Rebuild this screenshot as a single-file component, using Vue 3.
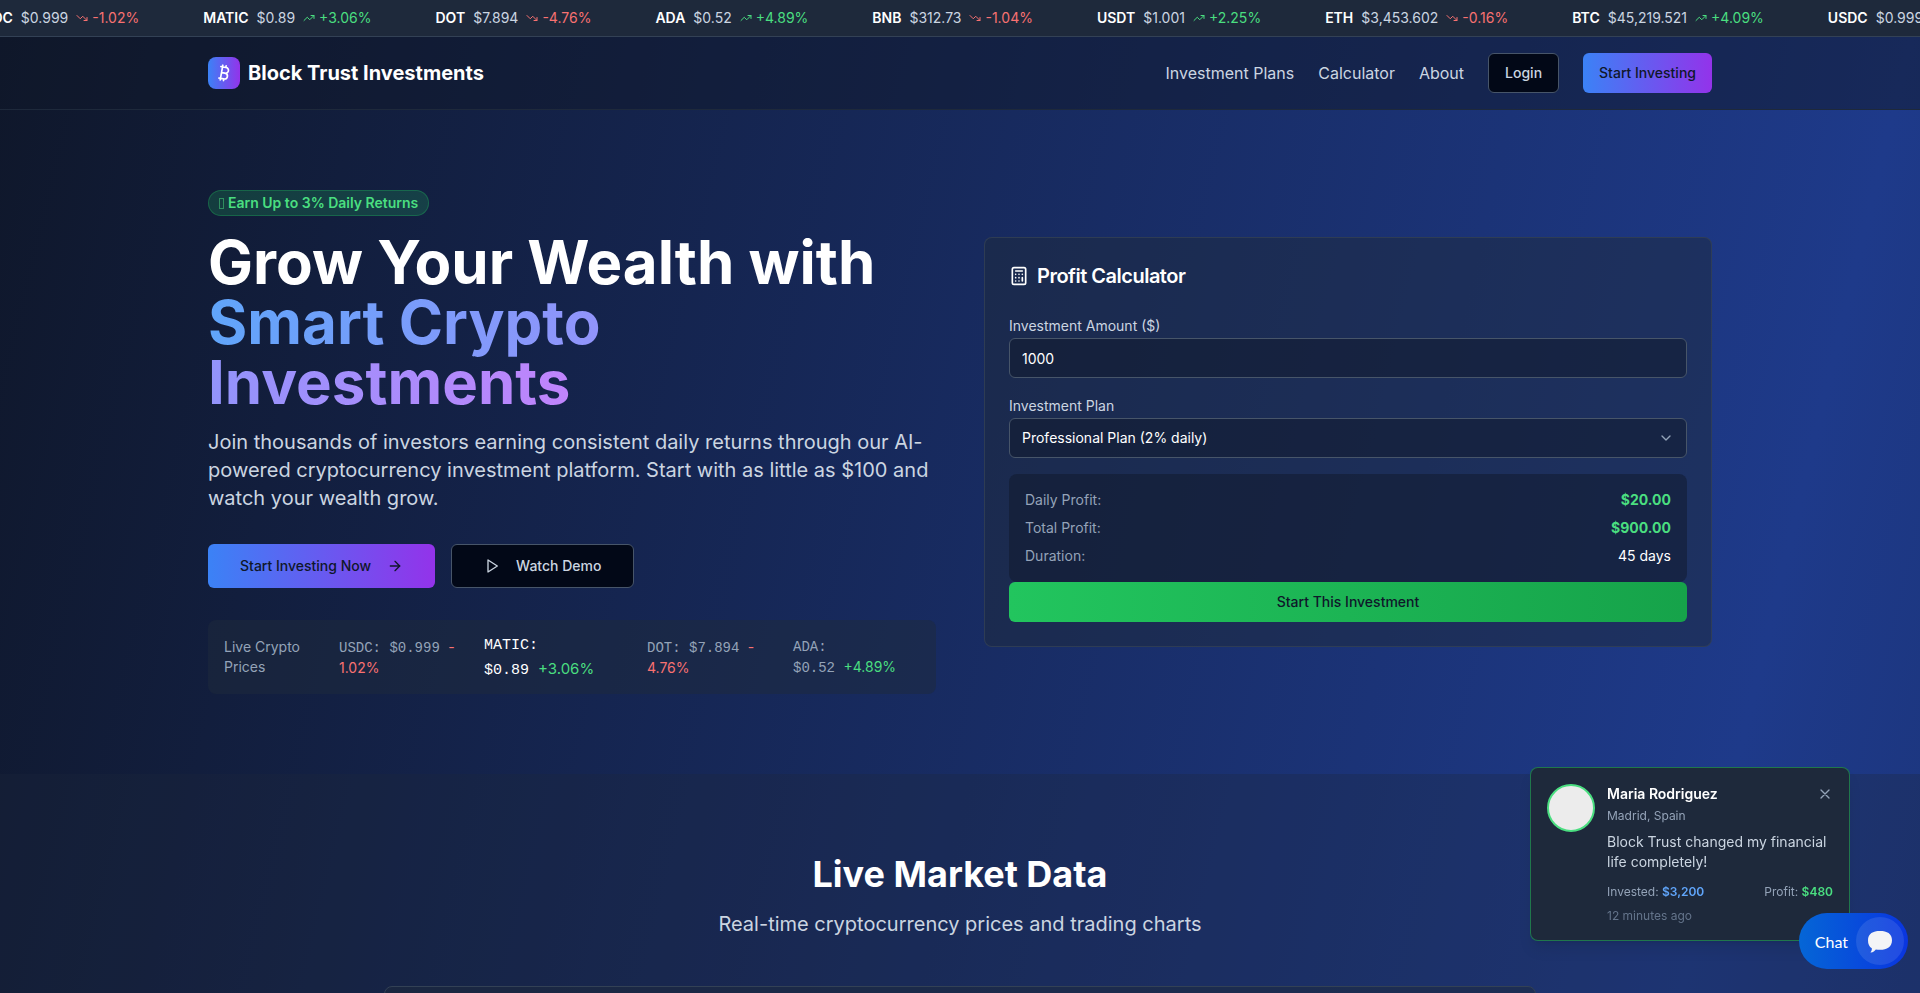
<script setup>
import { computed, ref } from 'vue'

const coins = [
  { symbol: 'USDC', price: '$0.999', change: -1.02 },
  { symbol: 'MATIC', price: '$0.89', change: 3.06 },
  { symbol: 'DOT', price: '$7.894', change: -4.76 },
  { symbol: 'ADA', price: '$0.52', change: 4.89 },
  { symbol: 'BNB', price: '$312.73', change: -1.04 },
  { symbol: 'USDT', price: '$1.001', change: 2.25 },
  { symbol: 'ETH', price: '$3,453.602', change: -0.16 },
  { symbol: 'BTC', price: '$45,219.521', change: 4.09 }
]

// the first coin comes round again at the end of the strip
const tickerItems = [...coins, coins[0]]

const plans = [
  { id: 'starter', name: 'Starter Plan', rate: 1, days: 30 },
  { id: 'professional', name: 'Professional Plan', rate: 2, days: 45 },
  { id: 'elite', name: 'Elite Plan', rate: 3, days: 60 }
]

const amount = ref('1000')
const planId = ref('professional')
const showToast = ref(true)

const plan = computed(() => plans.find(p => p.id === planId.value))
const dailyProfit = computed(() => ((Number(amount.value) || 0) * plan.value.rate) / 100)
const totalProfit = computed(() => dailyProfit.value * plan.value.days)

function formatChange(value) {
  return `${value > 0 ? '+' : ''}${value.toFixed(2)}%`
}

function trendClass(value) {
  return value > 0 ? 'up' : 'down'
}
</script>

<template>
  <div class="page">
    <div class="ticker">
      <div class="ticker-track">
        <div v-for="(coin, i) in tickerItems" :key="i" class="ticker-item">
          <span class="ticker-symbol">{{ coin.symbol }}</span>
          <span class="ticker-price">{{ coin.price }}</span>
          <span class="ticker-change" :class="trendClass(coin.change)">
            <svg v-if="coin.change > 0" class="icon icon-xs" viewBox="0 0 24 24">
              <polyline points="22 7 13.5 15.5 8.5 10.5 2 17" />
              <polyline points="16 7 22 7 22 13" />
            </svg>
            <svg v-else class="icon icon-xs" viewBox="0 0 24 24">
              <polyline points="22 17 13.5 8.5 8.5 13.5 2 7" />
              <polyline points="16 17 22 17 22 11" />
            </svg>
            {{ formatChange(coin.change) }}
          </span>
        </div>
      </div>
    </div>

    <header class="header">
      <div class="container header-inner">
        <div class="brand">
          <span class="brand-mark">
            <svg class="icon icon-md" viewBox="0 0 24 24">
              <path d="M11.767 19.089c4.924.868 6.14-6.025 1.216-6.894m-1.216 6.894L5.86 18.047m5.908 1.042-.347 1.97m1.563-8.864c4.924.869 6.14-6.025 1.215-6.893m-1.215 6.893-3.94-.694m5.155-6.2L8.29 4.26m5.908 1.042.348-1.97M7.48 20.364l3.126-17.727" />
            </svg>
          </span>
          <span class="brand-name">Block Trust Investments</span>
        </div>
        <nav class="nav">
          <a href="#plans">Investment Plans</a>
          <a href="#calculator">Calculator</a>
          <a href="#about">About</a>
          <button type="button" class="btn btn-outline">Login</button>
          <button type="button" class="btn btn-primary">Start Investing</button>
        </nav>
      </div>
    </header>

    <section class="hero">
      <div class="container hero-grid">
        <div class="hero-copy">
          <div class="hero-text">
            <div class="badge"><span class="badge-glyph"></span>Earn Up to 3% Daily Returns</div>
            <h1>Grow Your Wealth with <span class="gradient-text">Smart Crypto Investments</span></h1>
            <p>
              Join thousands of investors earning consistent daily returns through our AI-powered
              cryptocurrency investment platform. Start with as little as $100 and watch your wealth grow.
            </p>
          </div>
          <div class="hero-actions">
            <button type="button" class="btn btn-lg btn-primary">
              Start Investing Now
              <svg class="icon icon-sm" viewBox="0 0 24 24">
                <path d="M5 12h14" />
                <path d="m12 5 7 7-7 7" />
              </svg>
            </button>
            <button type="button" class="btn btn-lg btn-outline">
              <svg class="icon icon-sm" viewBox="0 0 24 24">
                <polygon points="6 3 20 12 6 21 6 3" />
              </svg>
              Watch Demo
            </button>
          </div>
          <div class="live">
            <div>Live Crypto<br>Prices</div>
            <div><span class="mono">USDC: $0.999 </span><span class="down">-<br>1.02%</span></div>
            <div class="live-active">
              <span class="mono">MATIC:<br>$0.89 </span><span class="up">+3.06%</span>
            </div>
            <div><span class="mono">DOT: $7.894 </span><span class="down">-<br>4.76%</span></div>
            <div><span class="mono">ADA:<br>$0.52 </span><span class="up">+4.89%</span></div>
          </div>
        </div>

        <div id="calculator" class="card">
          <h3 class="card-title">
            <svg class="icon icon-md" viewBox="0 0 24 24">
              <rect width="16" height="20" x="4" y="2" rx="2" />
              <path d="M8 6h8M16 14v4M16 10h.01M12 10h.01M8 10h.01M12 14h.01M8 14h.01M12 18h.01M8 18h.01" />
            </svg>
            Profit Calculator
          </h3>
          <div class="card-body">
            <div class="field">
              <label for="amount">Investment Amount ($)</label>
              <input id="amount" v-model="amount" type="text" inputmode="numeric" class="control">
            </div>
            <div class="field">
              <label for="plan">Investment Plan</label>
              <div class="select-wrap">
                <select id="plan" v-model="planId" class="control">
                  <option v-for="p in plans" :key="p.id" :value="p.id">
                    {{ p.name }} ({{ p.rate }}% daily)
                  </option>
                </select>
                <svg class="icon icon-sm select-arrow" viewBox="0 0 24 24">
                  <path d="m6 9 6 6 6-6" />
                </svg>
              </div>
            </div>
            <div>
              <dl class="results">
                <div><dt>Daily Profit:</dt><dd class="profit">${{ dailyProfit.toFixed(2) }}</dd></div>
                <div><dt>Total Profit:</dt><dd class="profit">${{ totalProfit.toFixed(2) }}</dd></div>
                <div><dt>Duration:</dt><dd>{{ plan.days }} days</dd></div>
              </dl>
              <button type="button" class="btn btn-green">Start This Investment</button>
            </div>
          </div>
        </div>
      </div>
    </section>

    <section class="market">
      <div class="container">
        <h2>Live Market Data</h2>
        <p>Real-time cryptocurrency prices and trading charts</p>
        <div class="chart-card"></div>
      </div>
    </section>

    <aside v-if="showToast" class="toast">
      <div class="avatar"></div>
      <div class="toast-body">
        <div class="toast-head">
          <strong>Maria Rodriguez</strong>
          <button type="button" class="toast-close" aria-label="Close" @click="showToast = false">
            <svg class="icon icon-sm" viewBox="0 0 24 24">
              <path d="M18 6 6 18M6 6l12 12" />
            </svg>
          </button>
        </div>
        <div class="toast-place">Madrid, Spain</div>
        <p>Block Trust changed my financial life completely!</p>
        <div class="toast-figures">
          <span>Invested: <b class="invested">$3,200</b></span>
          <span>Profit: <b class="up">$480</b></span>
        </div>
        <div class="toast-time">12 minutes ago</div>
      </div>
    </aside>

    <button type="button" class="chat">
      Chat
      <span class="chat-icon">
        <svg viewBox="0 0 24 24">
          <path d="M12 2C19 2 24 4.600 24 11.200S19 20.800 12 20.800c-1.500 0-3-.1-4.200-.4C6.800 22 5 23.200 3 23.600c-.5.1-.6-.3-.3-.6.9-1 1.300-2.300 1.100-3.800C1.200 17.700 0 15 0 11.200 0 4.600 5 2 12 2z" />
        </svg>
      </span>
    </button>
  </div>
</template>

<style>
body {
  margin: 0;
  background: #0f172a;
}
</style>

<style scoped>
.page,
.page * {
  box-sizing: border-box;
}

.page {
  background: linear-gradient(to bottom right, #0f172a, #1e3a8a, #0f172a) 0 0 / 100% 8000px no-repeat;
  color: #ffffff;
  font-family: Inter, "Liberation Sans", sans-serif;
  font-size: 16px;
  height: 100vh;
  line-height: 24px;
  overflow: hidden;
}

h1,
h2,
h3,
p,
dl,
dd {
  margin: 0;
}

button,
input,
select {
  font-family: inherit;
}

.container {
  margin: 0 auto;
  max-width: 1536px;
  padding: 0 16px;
}

.icon {
  fill: none;
  flex-shrink: 0;
  stroke: currentColor;
  stroke-linecap: round;
  stroke-linejoin: round;
  stroke-width: 2;
}

.icon-xs {
  height: 12px;
  width: 12px;
}

.icon-sm {
  height: 16px;
  width: 16px;
}

.icon-md {
  height: 20px;
  width: 20px;
}

.up {
  color: #4ade80;
}

.down {
  color: #f87171;
}

/* ticker */
.ticker {
  background: #1e293b;
  border-bottom: 1px solid #334155;
  overflow: hidden;
  padding: 8px 0;
}

.ticker-track {
  display: flex;
  font-size: 14px;
  line-height: 20px;
  margin-left: -59px;
  width: max-content;
}

.ticker-item {
  align-items: center;
  display: flex;
  gap: 8px;
  margin: 0 32px;
}

.ticker-symbol {
  font-weight: 600;
}

.ticker-price {
  color: #cbd5e1;
}

.ticker-change {
  align-items: center;
  display: flex;
  gap: 4px;
}

/* header */
.header {
  background: rgba(15, 23, 42, 0.5);
  border-bottom: 1px solid #1e293b;
  padding: 16px 0;
}

.header-inner,
.brand,
.nav {
  align-items: center;
  display: flex;
}

.header-inner {
  justify-content: space-between;
}

.brand {
  gap: 8px;
}

.brand-mark {
  align-items: center;
  background: linear-gradient(to right, #3b82f6, #9333ea);
  border-radius: 8px;
  display: flex;
  height: 32px;
  justify-content: center;
  width: 32px;
}

.brand-name {
  font-size: 20px;
  font-weight: 700;
  line-height: 28px;
}

.nav {
  gap: 24px;
}

.nav a {
  color: #cbd5e1;
  text-decoration: none;
}

.btn {
  align-items: center;
  border: 0;
  border-radius: 6px;
  cursor: pointer;
  display: inline-flex;
  font-size: 14px;
  font-weight: 500;
  height: 40px;
  justify-content: center;
  line-height: 20px;
  padding: 0 16px;
}

.btn-lg {
  gap: 16px;
  height: 44px;
  padding: 0 32px;
}

.btn-primary {
  background: linear-gradient(to right, #3b82f6, #9333ea);
  color: #0f172a;
}

.btn-outline {
  background: #020817;
  border: 1px solid #475569;
  color: #cbd5e1;
}

.btn-green {
  background: linear-gradient(to right, #22c55e, #16a34a);
  color: #0f172a;
  width: 100%;
}

/* hero */
.hero {
  padding: 80px 0;
}

.hero-grid {
  align-items: center;
  display: grid;
  gap: 48px;
  grid-template-columns: 1fr 1fr;
}

.hero-copy {
  display: flex;
  flex-direction: column;
  gap: 32px;
}

.hero-text {
  align-items: flex-start;
  display: flex;
  flex-direction: column;
  gap: 16px;
}

.badge {
  align-items: center;
  background: rgba(34, 197, 94, 0.2);
  border: 1px solid rgba(34, 197, 94, 0.3);
  border-radius: 13px;
  color: #4ade80;
  display: flex;
  font-size: 14px;
  font-weight: 600;
  gap: 4px;
  line-height: 20px;
  padding: 2px 10px;
}

.badge-glyph {
  border: 1px solid rgba(74, 222, 128, 0.5);
  height: 11px;
  width: 5px;
}

h1 {
  font-size: 60px;
  font-weight: 700;
  line-height: 60px;
}

.gradient-text {
  background: linear-gradient(to right, #60a5fa, #c084fc);
  background-clip: text;
  color: transparent;
}

.hero-text p {
  color: #cbd5e1;
  font-size: 20px;
  line-height: 28px;
}

.hero-actions {
  display: flex;
  gap: 16px;
}

.live {
  align-items: center;
  background: rgba(30, 41, 59, 0.5);
  border-radius: 8px;
  color: #94a3b8;
  display: grid;
  font-size: 14px;
  grid-template-columns: 115fr 145fr 163fr 146fr 127fr;
  line-height: 20px;
  padding: 16px;
  white-space: nowrap;
}

.mono {
  font-family: "Liberation Mono", monospace;
  white-space: pre-wrap;
}

.live-active {
  color: #ffffff;
  font-size: 15px;
  line-height: 23px;
  margin: -4px 0;
}

/* calculator */
.card {
  background: rgba(30, 41, 59, 0.5);
  border: 1px solid rgba(51, 65, 85, 0.8);
  border-radius: 8px;
  padding: 24px;
}

.card-title {
  align-items: center;
  display: flex;
  font-size: 20px;
  font-weight: 600;
  gap: 8px;
  letter-spacing: -0.025em;
  line-height: 28px;
  margin-bottom: 24px;
}

.card-body {
  display: flex;
  flex-direction: column;
  gap: 16px;
}

.field label {
  color: #cbd5e1;
  display: block;
  font-size: 14px;
  line-height: 24px;
}

.control {
  appearance: none;
  background: rgba(15, 23, 42, 0.5);
  border: 1px solid #475569;
  border-radius: 6px;
  color: #ffffff;
  display: block;
  font-size: 14px;
  height: 40px;
  line-height: 20px;
  padding: 8px 12px;
  width: 100%;
}

.select-wrap {
  position: relative;
}

.select-arrow {
  color: #94a3b8;
  pointer-events: none;
  position: absolute;
  right: 13px;
  top: 12px;
}

.results {
  background: rgba(15, 23, 42, 0.5);
  border-radius: 8px;
  display: flex;
  flex-direction: column;
  font-size: 14px;
  gap: 8px;
  line-height: 20px;
  padding: 16px;
}

.results div {
  display: flex;
  justify-content: space-between;
}

.results dt {
  color: #94a3b8;
}

.results .profit {
  color: #4ade80;
  font-weight: 700;
}

/* market */
.market {
  background: rgba(30, 41, 59, 0.3);
  padding: 80px 0;
  text-align: center;
}

h2 {
  font-size: 36px;
  font-weight: 700;
  line-height: 40px;
  margin-bottom: 16px;
}

.market p {
  color: #cbd5e1;
  font-size: 20px;
  line-height: 28px;
  margin-bottom: 48px;
}

.chart-card {
  background: rgba(30, 41, 59, 0.5);
  border: 1px solid #334155;
  border-radius: 8px;
  height: 480px;
  margin: 0 auto;
  max-width: 1152px;
}

/* toast */
.toast {
  background: #1e293b;
  border: 1px solid rgba(34, 197, 94, 0.5);
  border-radius: 8px;
  bottom: 52px;
  box-shadow: 0 10px 15px -3px rgba(0, 0, 0, 0.1), 0 4px 6px -4px rgba(0, 0, 0, 0.1);
  display: flex;
  font-size: 12px;
  gap: 12px;
  line-height: 16px;
  padding: 16px;
  position: fixed;
  right: 70px;
  width: 320px;
}

.avatar {
  background: #ececec;
  border: 2px solid #4ade80;
  border-radius: 50%;
  flex-shrink: 0;
  height: 48px;
  width: 48px;
}

.toast-body {
  flex: 1;
}

.toast-head {
  align-items: center;
  display: flex;
  font-size: 14px;
  justify-content: space-between;
  line-height: 20px;
  margin-bottom: 4px;
}

.toast-head strong,
.toast-figures b {
  font-weight: 600;
}

.toast-close {
  background: none;
  border: 0;
  color: #94a3b8;
  cursor: pointer;
  display: flex;
  padding: 0;
}

.toast-place,
.toast-figures {
  color: #94a3b8;
}

.toast-body p {
  color: #cbd5e1;
  font-size: 14px;
  line-height: 20px;
  margin: 8px 0 12px;
}

.toast-figures {
  display: flex;
  justify-content: space-between;
  margin-bottom: 8px;
}

.invested {
  color: #60a5fa;
}

.toast-time {
  color: #64748b;
}

/* chat launcher */
.chat {
  align-items: center;
  background: linear-gradient(to right, #0566d6, #0a35e0);
  border: 0;
  border-radius: 28px;
  bottom: 24px;
  color: #ffffff;
  cursor: pointer;
  display: flex;
  font-family: Lato, sans-serif;
  font-size: 16px;
  gap: 8px;
  height: 56px;
  padding: 4px 4px 4px 16px;
  position: fixed;
  right: 12px;
}

.chat-icon {
  align-items: center;
  background: rgba(255, 255, 255, 0.1);
  border-radius: 50%;
  display: flex;
  height: 48px;
  justify-content: center;
  width: 48px;
}

.chat-icon svg {
  fill: #f3f4f6;
  height: 24px;
  width: 24px;
}
</style>
